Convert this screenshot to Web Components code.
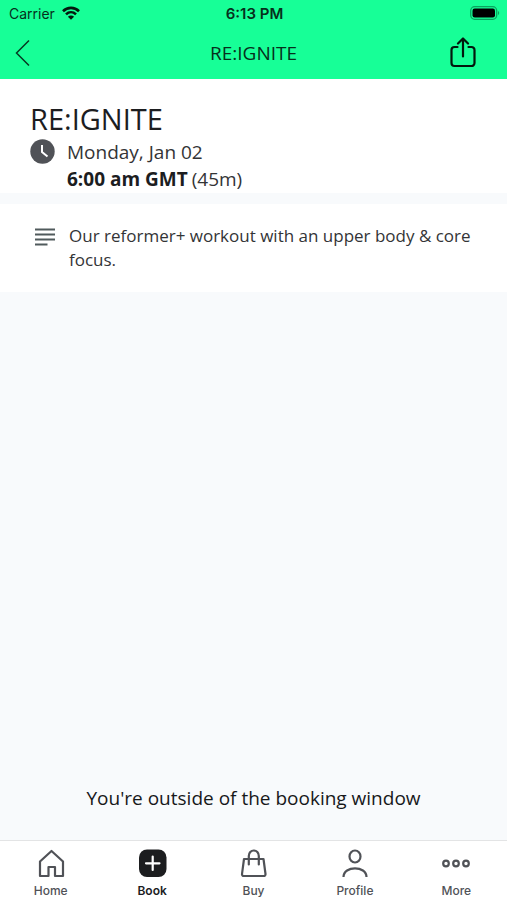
<!DOCTYPE html>
<html lang="en">
<head>
<meta charset="utf-8">
<meta name="viewport" content="width=device-width, initial-scale=1">
<title>RE:IGNITE</title>
<style>
    :root {
        --brand-color: #17ff97;
        --bg-color: #f8fafc;
        --card-color: #ffffff;
        --text-color: #333436;
        --text-color-strong: #1c1d1f;
        --icon-color: #505257;
        --page-font: "Open Sans", "Noto Sans", sans-serif;
        --system-font: Inter, "Liberation Sans", sans-serif;
    }

    body {
        margin: 0;
        color: var(--text-color);
        background-color: var(--bg-color);
        font-family: var(--page-font);
    }
</style>
</head>
<body>

<template id="class-screen-template">
    <style>
        :host {
            display: flex;
            flex-direction: column;
            min-height: 100vh;
        }

        header {
            background-color: var(--brand-color);
        }

        main {
            flex-grow: 1;
            display: flex;
            flex-direction: column;
            gap: 11px;
        }
    </style>
    <header><slot name="header"></slot></header>
    <main><slot></slot></main>
    <slot name="footer"></slot>
</template>

<template id="status-bar-template">
    <style>
        :host {
            display: grid;
            grid-template-columns: 1fr auto 1fr;
            align-items: center;
            height: 26px;
            padding: 0 7px 0 9px;
            color: #06301c;
            font-family: var(--system-font);
            font-size: 14px;
        }

        .carrier {
            display: flex;
            align-items: center;
            gap: 7px;
        }

        .time {
            font-size: 15px;
            font-weight: 600;
        }

        .battery {
            justify-self: end;
        }

        svg {
            display: block;
        }
    </style>
    <div class="carrier">
        <slot name="carrier"></slot>
        <svg width="18" height="14" viewBox="0 0 18 14" fill="none" stroke="#04180e" stroke-width="2.6">
            <path d="M1 5.2C5.5 .8 12.500 .8 17 5.2"/>
            <path d="M4 8.400C6.900 5.600 11.100 5.600 14 8.400"/>
            <path d="M9 13.800L5.900 10.700C7.700 9.200 10.300 9.200 12.100 10.700Z" fill="#04180e" stroke="none"/>
        </svg>
    </div>
    <div class="time"><slot name="time"></slot></div>
    <svg class="battery" width="30" height="14" viewBox="0 0 30 14">
        <rect x=".7" y=".7" width="26" height="12.600" rx="4" fill="none" stroke="#0aa45f" stroke-width="1.300"/>
        <rect x="2.500" y="2.500" width="22.500" height="9" rx="2.200" fill="#000"/>
        <path d="M28 5v4c1.600-.6 1.600-3.400 0-4z" fill="#0aa45f"/>
    </svg>
</template>

<template id="nav-bar-template">
    <style>
        :host {
            display: grid;
            grid-template-columns: 1fr auto 1fr;
            align-items: center;
            height: 53px;
            padding: 0 29px 0 14px;
            box-sizing: border-box;
        }

        h1 {
            margin: 0 0 0 15px;
            color: #06301c;
            font-size: 19px;
            line-height: 24px;
            font-weight: 400;
        }

        button {
            all: unset;
            cursor: pointer;
        }

        .share {
            justify-self: end;
        }

        svg {
            display: block;
        }
    </style>
    <button aria-label="Back">
        <svg width="18" height="28" viewBox="0 0 18 28" fill="none" stroke="#063a22" stroke-width="1.500">
            <path d="M15 1.500L2.500 14L15 26.500"/>
        </svg>
    </button>
    <h1><slot></slot></h1>
    <button class="share" aria-label="Share">
        <svg width="30" height="32" viewBox="0 0 30 32" fill="none" stroke="#03180d" stroke-width="2.200" stroke-linecap="round" stroke-linejoin="round">
            <path d="M9.500 10H6.500a3 3 0 0 0-3 3V26a3 3 0 0 0 3 3h17a3 3 0 0 0 3-3V13a3 3 0 0 0-3-3h-3"/>
            <path d="M15 19.500V1.500M10 6.500l5-5 5 5"/>
        </svg>
    </button>
</template>

<template id="class-summary-template">
    <style>
        :host {
            display: block;
            padding: 20px 30px 0;
            background-color: var(--card-color);
        }

        h2 {
            margin: 0;
            color: var(--text-color-strong);
            font-size: 29px;
            line-height: 40px;
            font-weight: 400;
        }

        .when {
            display: flex;
            align-items: flex-start;
            gap: 12px;
            font-size: 19px;
            line-height: 27px;
        }

        svg {
            display: block;
            flex: none;
        }

        .time {
            display: flex;
            gap: 4px;
        }

        strong {
            color: var(--text-color-strong);
            font-weight: 700;
        }
    </style>
    <h2><slot name="name"></slot></h2>
    <div class="when">
        <svg width="25" height="25" viewBox="0 0 25 25">
            <circle cx="12.500" cy="12.500" r="12.200" fill="#505257"/>
            <path d="M12 6v7l5.500 4.500" fill="none" stroke="#fff" stroke-width="2"/>
        </svg>
        <div>
            <div><slot name="date"></slot></div>
            <div class="time"><strong><slot name="time"></slot></strong><slot name="duration"></slot></div>
        </div>
    </div>
</template>

<template id="class-description-template">
    <style>
        :host {
            display: flex;
            align-items: flex-start;
            gap: 14px;
            padding: 20px 30px 20px 35px;
            background-color: var(--card-color);
            font-size: 17px;
            line-height: 24px;
        }

        svg {
            display: block;
            flex: none;
        }

        p {
            margin: 0;
        }
    </style>
    <svg width="20" height="24" viewBox="0 0 20 24" fill="none" stroke="#505a5c" stroke-width="2.200">
        <path d="M0 5.500h20M0 10.500h20M0 15.500h20M0 20.500h12.500"/>
    </svg>
    <p><slot></slot></p>
</template>

<template id="booking-notice-template">
    <style>
        :host {
            display: block;
            margin-top: auto;
            padding: 0 16px 28px;
            color: #17181a;
            font-size: 19px;
            line-height: 28px;
            text-align: center;
        }
    </style>
    <slot></slot>
</template>

<template id="tab-bar-template">
    <style>
        :host {
            display: block;
            border-top: 1px solid #e3e4e5;
            background-color: var(--card-color);
        }

        nav {
            display: flex;
            height: 59px;
        }
    </style>
    <nav><slot></slot></nav>
</template>

<template id="tab-item-template">
    <style>
        :host {
            flex: 1 1 0;
        }

        a {
            display: flex;
            flex-direction: column;
            align-items: center;
            gap: 5px;
            padding-top: 7px;
            color: var(--icon-color);
            font-family: var(--system-font);
            font-size: 12px;
            line-height: 16px;
            font-weight: 500;
            text-decoration: none;
        }

        :host([active]) a {
            color: var(--text-color-strong);
            font-weight: 600;
        }

        svg {
            display: block;
            fill: none;
            stroke: currentColor;
            stroke-width: 2.2;
        }
    </style>
    <a>
        <svg width="30" height="30" viewBox="0 0 30 30" aria-hidden="true"></svg>
        <slot></slot>
    </a>
</template>

<class-screen>
    <status-bar slot="header">
        <span slot="carrier">Carrier</span>
        <span slot="time">6:13 PM</span>
    </status-bar>
    <nav-bar slot="header">RE:IGNITE</nav-bar>

    <class-summary>
        <span slot="name">RE:IGNITE</span>
        <span slot="date">Monday, Jan 02</span>
        <span slot="time">6:00 am GMT</span>
        <span slot="duration">(45m)</span>
    </class-summary>
    <class-description>Our reformer+ workout with an upper body &amp; core focus.</class-description>
    <booking-notice>You're outside of the booking window</booking-notice>

    <tab-bar slot="footer">
        <tab-item icon="home" href="#home">Home</tab-item>
        <tab-item icon="book" href="#book" active>Book</tab-item>
        <tab-item icon="buy" href="#buy">Buy</tab-item>
        <tab-item icon="profile" href="#profile">Profile</tab-item>
        <tab-item icon="more" href="#more">More</tab-item>
    </tab-bar>
</class-screen>

<script type="module">
    const TAB_ICONS = {
        home: `<path d="M4 28V13.500L15.500 3 27 13.500V28H19v-9h-6.500v9z" stroke-linejoin="round"/>`,
        book: `<rect x="2" y="1.500" width="27.500" height="27.500" rx="8" fill="currentColor" stroke="none"/>
            <path d="M15.700 8.500v13.500M9 15.300h13.500" stroke="#fff" stroke-width="2.200" stroke-linecap="round"/>`,
        buy: `<path d="M5 11h19.500l2 15a1.800 1.800 0 0 1-1.800 2H4.800a1.800 1.800 0 0 1-1.800-2z" stroke-linejoin="round"/>
            <path d="M9.800 16.500V8a5 5.500 0 0 1 10 0v8.500" stroke-linecap="round"/>`,
        profile: `<ellipse cx="15" cy="8.500" rx="5.500" ry="6"/>
            <path d="M3.500 29c0-11.500 23-11.500 23 0"/>`,
        more: `<circle cx="5" cy="15.500" r="2.800"/><circle cx="15" cy="15.500" r="2.800"/><circle cx="25" cy="15.500" r="2.800"/>`,
    };

    class TemplateElement extends HTMLElement {
        constructor() {
            super();

            const template = document.getElementById(`${this.localName}-template`);
            this.attachShadow({ mode: "open" }).append(template.content.cloneNode(true));
        }
    }

    customElements.define("class-screen", class extends TemplateElement {});
    customElements.define("status-bar", class extends TemplateElement {});
    customElements.define("nav-bar", class extends TemplateElement {});
    customElements.define("class-summary", class extends TemplateElement {});
    customElements.define("class-description", class extends TemplateElement {});
    customElements.define("booking-notice", class extends TemplateElement {});
    customElements.define("tab-bar", class extends TemplateElement {});

    customElements.define(
        "tab-item",
        class extends TemplateElement {
            connectedCallback() {
                const link = this.shadowRoot.querySelector("a");
                link.href = this.getAttribute("href");
                if (this.hasAttribute("active")) {
                    link.setAttribute("aria-current", "page");
                }
                this.shadowRoot.querySelector("svg").innerHTML = TAB_ICONS[this.getAttribute("icon")];
            }
        },
    );
</script>
</body>
</html>
